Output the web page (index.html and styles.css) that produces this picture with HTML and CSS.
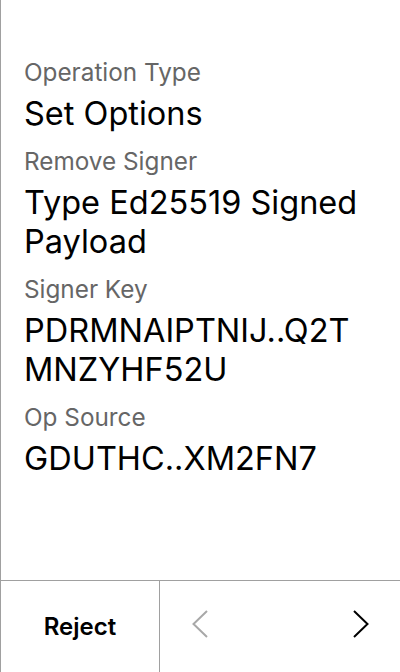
FILE: index.html
```html
<!DOCTYPE html>
<html>
<head>
<meta charset="utf-8">
<link rel="stylesheet" href="styles.css">
</head>
<body>
<div class="screen">
  <main class="content">
    <div class="field">
      <div class="label">Operation Type</div>
      <div class="value">Set Options</div>
    </div>
    <div class="field">
      <div class="label">Remove Signer</div>
      <div class="value">Type Ed25519 Signed<br>Payload</div>
    </div>
    <div class="field">
      <div class="label">Signer Key</div>
      <div class="value">PDRMNAIPTNIJ..Q2T<br>MNZYHF52U</div>
    </div>
    <div class="field">
      <div class="label">Op Source</div>
      <div class="value">GDUTHC..XM2FN7</div>
    </div>
  </main>
  <footer class="footer">
    <div class="reject">Reject</div>
    <div class="nav">
      <div class="nav-btn">
        <svg width="16" height="30" viewBox="0 0 16 30"><polyline points="15,2 1.5,15 15,28" fill="none" stroke="#a8a8a8" stroke-width="2"/></svg>
      </div>
      <div class="nav-btn">
        <svg width="16" height="30" viewBox="0 0 16 30"><polyline points="1,2 14.5,15 1,28" fill="none" stroke="#000" stroke-width="2"/></svg>
      </div>
    </div>
  </footer>
</div>
</body>
</html>
```
FILE: styles.css
```css
* { box-sizing: border-box; }
html, body { margin: 0; padding: 0; }
body {
  width: 400px;
  height: 672px;
  background: #fff;
  font-family: Inter, "Noto Sans", sans-serif;
  color: #000;
}
.screen {
  width: 400px;
  height: 672px;
  display: flex;
  flex-direction: column;
  border-left: 1px solid #a0a0a0;
}
.content {
  flex: 1;
  padding: 58px 0 0 23px;
  display: flex;
  flex-direction: column;
  gap: 14px;
}
.label {
  font-size: 24.3px;
  line-height: 28px;
  color: #666;
  margin-bottom: 8px;
}
.value {
  font-size: 32.5px;
  line-height: 39px;
  font-weight: 400;
}
.footer {
  height: 92px;
  border-top: 1px solid #a0a0a0;
  display: flex;
}
.reject {
  width: 159px;
  border-right: 1px solid #a0a0a0;
  display: flex;
  align-items: center;
  justify-content: center;
  font-size: 24px;
  font-weight: 600;
}
.nav {
  flex: 1;
  display: flex;
  justify-content: space-between;
  align-items: center;
  padding: 0 31px 6px 32px;
}
.nav-btn { display: flex; }
```
